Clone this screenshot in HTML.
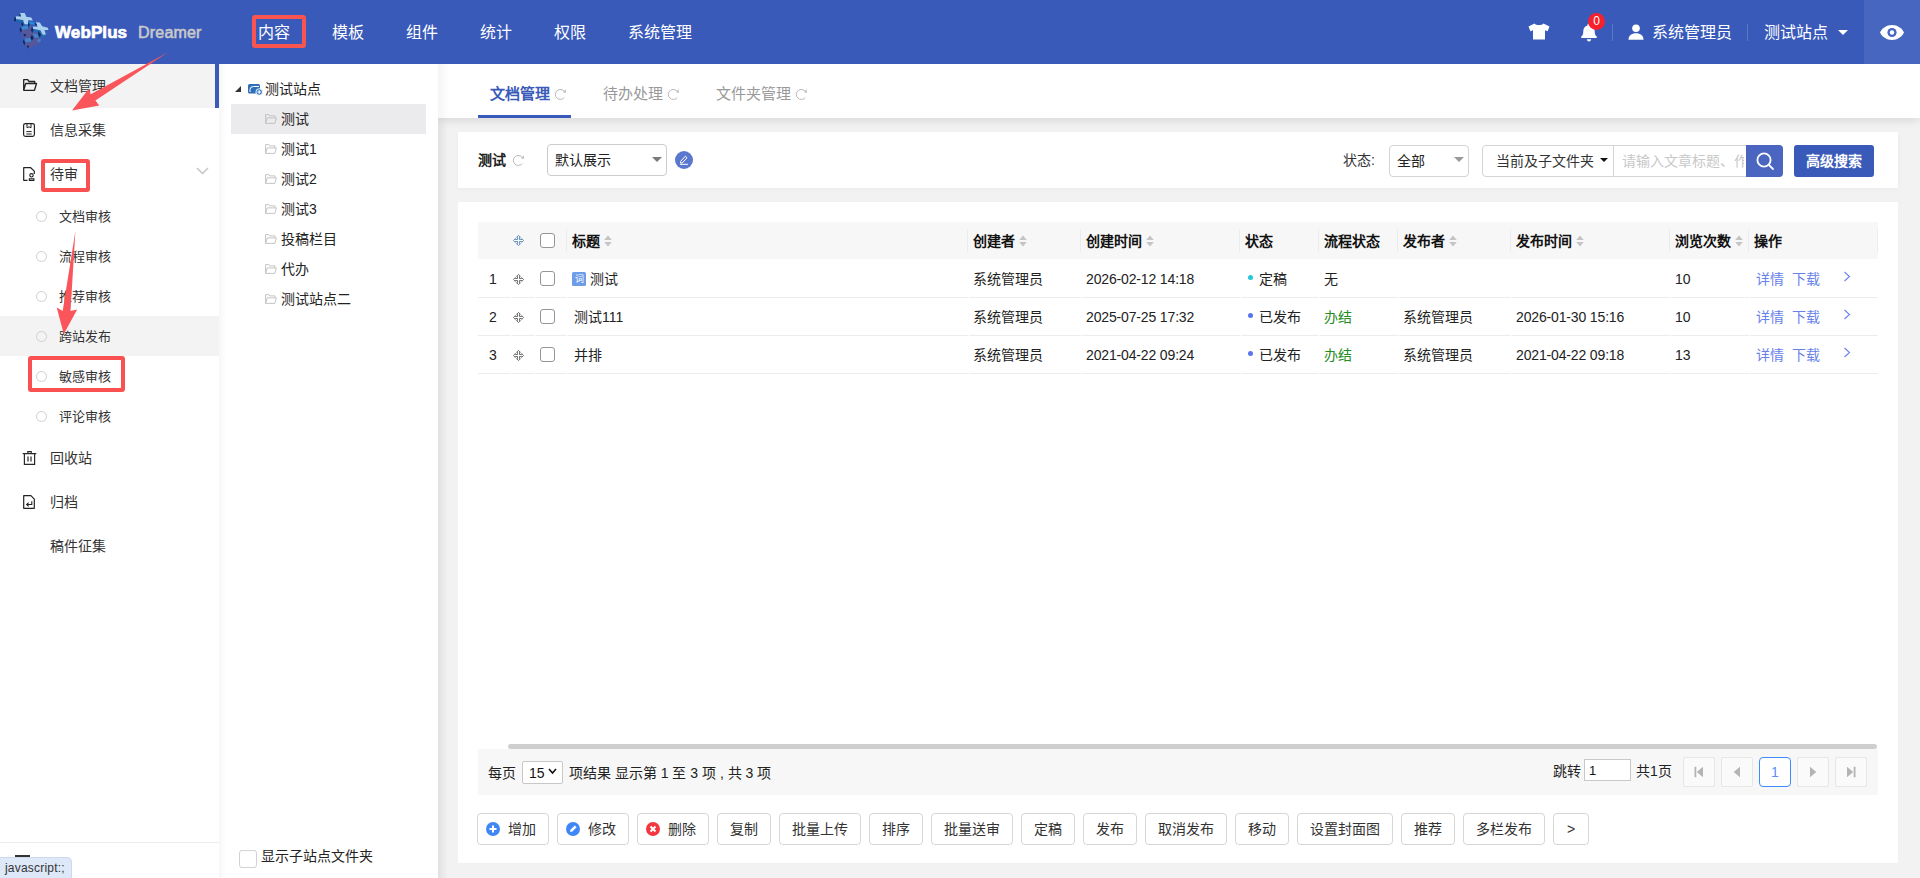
<!DOCTYPE html>
<html lang="zh-CN">
<head>
<meta charset="utf-8">
<title>WebPlus Dreamer</title>
<style>
*{box-sizing:border-box;margin:0;padding:0}
html,body{width:1920px;height:878px;overflow:hidden;background:#f2f2f2;font-family:"Liberation Sans",sans-serif;font-size:14px;color:#222}
.abs{position:absolute}
#hdr{z-index:3;position:absolute;left:0;top:0;width:1920px;height:64px;background:#395ab9}
#hdr .nav{position:absolute;top:0;height:64px;line-height:65px;color:#fff;font-size:16px;white-space:nowrap}
#eye{position:absolute;left:1864px;top:0;width:56px;height:64px;background:#4766c0}
#side{z-index:2;position:absolute;left:0;top:64px;width:219px;height:814px;background:#fff}
#side .it{position:absolute;left:0;width:219px;height:44px;line-height:44px;font-size:14px;color:#333}
#side .it span{position:absolute;left:50px;top:0;white-space:nowrap}
#side .sub{position:absolute;left:0;width:219px;height:40px;line-height:40px;font-size:13px;color:#333}
#side .sub span{position:absolute;left:59px;top:0.500px;white-space:nowrap}
#side .sub i{position:absolute;left:36px;top:15px;width:11px;height:11px;border:1.200px solid #cfcfcf;border-radius:50%}
#tree{z-index:2;position:absolute;left:219px;top:64px;width:219px;height:814px;background:#fff}
#tree .n{position:absolute;left:62px;height:30px;line-height:30px;margin-top:0.500px;font-size:14px;color:#222;white-space:nowrap}
#main{position:absolute;left:0;top:0;width:1920px;height:878px}
.panel{position:absolute;background:#fff}
.th{position:absolute;top:0;height:38px;line-height:38px;font-weight:bold;font-size:14px;color:#111;white-space:nowrap}
.td{position:absolute;height:38px;line-height:38px;font-size:14px;color:#222;white-space:nowrap}
.btn{position:absolute;top:813px;height:32px;line-height:30px;border:1px solid #d6d6d6;border-radius:4px;background:#fff;font-size:14px;color:#333;text-align:center;white-space:nowrap}
.pg{position:absolute;top:12px;width:32px;height:30px;border:1px solid #e2e2e2;border-radius:3px;background:#f5f5f5}
</style>
</head>
<body>
<div id="hdr">
<svg class="abs" style="left:8px;top:6px" width="50" height="50" viewBox="0 0 878 878">
<path d="M240 400L400 330 440 400 440 450 540 480 575 560 570 640 480 690 360 750 300 680 280 560 230 470z" fill="#57589c"/>
<path d="M110 215L135 232 265 247 290 320 370 325 365 400 250 420 235 300 130 290 110 265z" fill="#2563ad"/>
<path d="M440 400L570 425 610 505 665 500 705 420 700 460 660 540 580 560 540 480 440 450z" fill="#2a6bb5"/>
<path d="M235 360L350 340 360 400 250 420z" fill="#3d86cf"/>
<path d="M300 570L390 560 410 620 310 640z" fill="#3d86cf"/>
<path d="M440 480L520 495 545 560 460 550z" fill="#3d86cf"/>
<path d="M515 595L570 570 575 620 530 640z" fill="#3d86cf"/>
<path d="M370 275L450 285 465 325 385 320z" fill="#1c92dc"/>
<path d="M205 125L295 125 320 190 410 200 435 255 350 250 370 325 290 320 265 245 135 230 130 180 225 185z" fill="#a9d1ef"/>
<path d="M490 285L560 290 600 355 700 380 710 420 640 420 665 500 610 505 570 425 440 400 440 360 520 365z" fill="#a9d1ef"/>
<path d="M120 195L135 180 140 262 115 270 105 240z" fill="#0b2b60"/>
<path d="M200 140L215 130 225 185 200 175z" fill="#0b2b60"/>
<path d="M240 280L270 320 255 365 232 320z" fill="#0b2b60"/>
<path d="M215 370L245 420 225 470 203 420z" fill="#0b2b60"/>
<path d="M265 490L320 498 298 545z" fill="#0b2b60"/>
<path d="M420 505L450 560 420 612 393 555z" fill="#0b2b60"/>
<path d="M272 585L302 640 287 692 262 632z" fill="#0b2b60"/>
<path d="M328 695L372 700 350 752z" fill="#0b2b60"/>
<path d="M420 370L447 420 425 472 403 420z" fill="#0b2b60"/>
<path d="M530 435L580 500 560 557 528 500z" fill="#0b2b60"/>
<path d="M478 290L512 335 480 342z" fill="#0b2b60"/>
<path d="M360 268L378 330 362 385 350 320z" fill="#0b2b60"/>
</svg>
<div class="abs" style="left:55px;top:22px;font-size:17px;line-height:22px;font-weight:bold;color:#fff;letter-spacing:0.1px;white-space:nowrap;-webkit-text-stroke:0.7px #fff">WebPlus</div>
<div class="abs" style="left:138px;top:22px;font-size:16px;line-height:22px;color:#c9c9c9;letter-spacing:0.2px;white-space:nowrap;-webkit-text-stroke:0.6px #c9c9c9">Dreamer</div>
<div class="nav" style="left:258px">内容</div>
<div class="nav" style="left:332px">模板</div>
<div class="nav" style="left:406px">组件</div>
<div class="nav" style="left:480px">统计</div>
<div class="nav" style="left:554px">权限</div>
<div class="nav" style="left:628px">系统管理</div>
<div class="abs" style="left:252px;top:15px;width:54px;height:33px;border:4px solid #f95450;border-radius:3px"></div>
<!-- tshirt -->
<svg class="abs" style="left:1528px;top:23px" width="22" height="17" viewBox="0 0 22 17"><path d="M6.5 0.5C8 2.6 14 2.6 15.5 0.5L21.5 3.5 19.6 8.2 17 7.2V16.5H5V7.2L2.4 8.2 0.5 3.5z" fill="#fff"/></svg>
<!-- bell -->
<svg class="abs" style="left:1580px;top:23px" width="18" height="19" viewBox="0 0 18 19"><path d="M9 0.5c0.9 0 1.5 0.6 1.5 1.4v0.5c2.6 0.7 4.2 2.9 4.2 5.6 0 3.4 0.8 4.6 2 5.6 0.5 0.5 0.3 1.5-0.6 1.5H1.9c-0.9 0-1.1-1-0.6-1.5 1.2-1 2-2.2 2-5.6 0-2.7 1.6-4.9 4.2-5.6V1.9C7.5 1.1 8.1 0.5 9 0.5zM6.8 16.2h4.4c0 1.2-1 2.2-2.2 2.2s-2.2-1-2.2-2.2z" fill="#fff"/></svg>
<div class="abs" style="left:1588px;top:13px;width:17px;height:17px;border-radius:50%;background:#f5222d;color:#fff;font-size:12px;line-height:17px;text-align:center">0</div>
<div class="abs" style="left:1612px;top:24px;width:1px;height:17px;background:#5b76c6"></div>
<!-- user -->
<svg class="abs" style="left:1628px;top:24px" width="16" height="16" viewBox="0 0 16 16"><circle cx="8" cy="4.2" r="3.8" fill="#fff"/><path d="M0.5 15.8c0-4.3 3-6.6 7.5-6.6s7.5 2.3 7.5 6.6z" fill="#fff"/></svg>
<div class="nav" style="left:1652px">系统管理员</div>
<div class="abs" style="left:1747px;top:24px;width:1px;height:17px;background:#5b76c6"></div>
<div class="nav" style="left:1764px">测试站点</div>
<div class="abs" style="left:1838px;top:30px;width:0;height:0;border-left:5px solid transparent;border-right:5px solid transparent;border-top:5px solid #fff"></div>
<div id="eye">
<svg class="abs" style="left:16px;top:25px" width="24" height="15" viewBox="0 0 24 15"><path d="M12 0C6.5 0 2 3.4 0 7.5 2 11.6 6.5 15 12 15s10-3.4 12-7.5C22 3.4 17.500 0 12 0z" fill="#fff"/><circle cx="12" cy="7.500" r="4.600" fill="#4766c0"/><circle cx="12" cy="7.500" r="2.200" fill="#fff"/></svg>
</div>
</div>
<div id="side">
<div class="it" style="top:0;background:#f3f3f3;width:215px"><span>文档管理</span>
<svg class="abs" style="left:22px;top:14px" width="16" height="14" viewBox="0 0 16 14"><path d="M1.700 12.300V1.700h4l1.300 1.800h5.700v2M1.700 12.300l2-6.800h10.800l-2 6.800z" fill="none" stroke="#222" stroke-width="1.300" stroke-linejoin="round"/></svg>
</div>
<div class="abs" style="left:215px;top:0;width:4px;height:44px;background:#395ab9"></div>
<div class="it" style="top:44px"><span>信息采集</span>
<svg class="abs" style="left:22px;top:14px" width="14" height="16" viewBox="0 0 14 16"><rect x="1.600" y="1.600" width="10.800" height="12.800" rx="1.800" fill="none" stroke="#222" stroke-width="1.200"/><path d="M5 1.600v4.200l2-1 2 1V1.600M4.300 9.600h5.400M4.300 12h5.400" fill="none" stroke="#222" stroke-width="1"/></svg>
</div>
<div class="it" style="top:88px"><span>待审</span>
<svg class="abs" style="left:22px;top:14px" width="14" height="16" viewBox="0 0 14 16"><path d="M5.500 14.300H1.700V1.700h7l3.600 3.400v3" fill="none" stroke="#222" stroke-width="1.200" stroke-linejoin="round"/><circle cx="9.500" cy="9.300" r="1.700" fill="none" stroke="#222" stroke-width="1.100"/><path d="M6.800 14.500h5.600M7.300 12.700h4.600v1.600H7.300z" fill="none" stroke="#222" stroke-width="1.100"/></svg>
<svg class="abs" style="left:196px;top:15px" width="13" height="8" viewBox="0 0 13 8"><path d="M1 1l5.500 5.500L12 1" fill="none" stroke="#c2c2c2" stroke-width="1.400"/></svg>
</div>
<div class="sub" style="top:132px"><i></i><span>文档审核</span></div>
<div class="sub" style="top:172px"><i></i><span>流程审核</span></div>
<div class="sub" style="top:212px"><i></i><span>推荐审核</span></div>
<div class="sub" style="top:252px;background:#f3f3f3"><i></i><span>跨站发布</span></div>
<div class="sub" style="top:292px"><i></i><span>敏感审核</span></div>
<div class="sub" style="top:332px"><i></i><span>评论审核</span></div>
<div class="it" style="top:372px"><span>回收站</span>
<svg class="abs" style="left:22px;top:14px" width="15" height="16" viewBox="0 0 15 16"><path d="M0.700 3.600h13.600M5.800 3.400V1.700h3.400v1.700M2.400 3.800v10.600h10.200V3.800M6 6.500v5M9 6.500v5" fill="none" stroke="#2a2a2a" stroke-width="1.200"/></svg>
</div>
<div class="it" style="top:416px"><span>归档</span>
<svg class="abs" style="left:22px;top:14px" width="14" height="16" viewBox="0 0 14 16"><path d="M1.700 14.300V1.700h7.200l3.400 3.400v9.200z" fill="none" stroke="#222" stroke-width="1.200" stroke-linejoin="round"/><path d="M9.800 7.200v3.300H4.800M6.600 8.700l-1.900 1.800 1.900 1.800" fill="none" stroke="#222" stroke-width="1.100"/></svg>
</div>
<div class="it" style="top:460px"><span>稿件征集</span></div>
<div class="abs" style="left:0;top:778px;width:219px;height:1px;background:#ececec"></div>
<div class="abs" style="left:15px;top:791px;width:15px;height:2px;background:#333"></div>
<!-- red annotations -->
<div class="abs" style="left:41px;top:95px;width:49px;height:33px;border:4px solid #f95052;border-radius:3px"></div>
<div class="abs" style="left:28px;top:292px;width:97px;height:36px;border:4px solid #f95052;border-radius:3px"></div>
</div>
<svg class="abs" style="left:0;top:0;pointer-events:none;z-index:6" width="260" height="400" viewBox="0 0 260 400">
<path d="M168 52.300L90.700 94.300 89 88.400 72 110.500 99.200 105.400 95.400 100.500z" fill="#f9555a"/>
<path d="M75.400 231L70.500 311.100 77.200 309.400 63.800 334 56.700 307.500 62.700 311.100z" fill="#f9555a"/>
</svg>
<div class="abs" style="z-index:6;left:0;top:857px;width:72px;height:21px;background:#dde8f8;border-top-right-radius:5px;border-top:1px solid #cdd9ec;border-right:1px solid #cdd9ec;font-size:12px;line-height:20px;color:#333;padding-left:5px;letter-spacing:0.2px">javascript:;</div>
<div id="tree">
<div class="abs" style="left:0;top:0;width:7px;height:814px;background:linear-gradient(to right,rgba(0,0,0,0.035),rgba(0,0,0,0))"></div>
<svg class="abs" style="left:15px;top:21px" width="8" height="8" viewBox="0 0 8 8"><path d="M7 1v6H1z" fill="#333"/></svg>
<svg class="abs" style="left:28px;top:19px" width="16" height="13" viewBox="0 0 16 13"><rect x="1" y="1" width="12" height="9.500" rx="1.500" fill="#2e6fb7"/><path d="M3 9V6.500Q3 3.500 6.500 3.500H12" fill="none" stroke="#fff" stroke-width="1"/><circle cx="12.200" cy="9" r="3.300" fill="#3b7dc8" stroke="#fff" stroke-width="0.900"/><path d="M12.200 7.200v3.600M10.400 9h3.600" stroke="#fff" stroke-width="1.200"/></svg>
<div class="n" style="left:46px;top:9px">测试站点</div>
<div class="abs" style="left:12px;top:40px;width:195px;height:30px;background:#ebebed"></div>
<svg width="0" height="0" style="position:absolute"><defs><symbol id="fo" viewBox="0 0 12 10"><path d="M0.600 9.400V0.600h3.200l1 1.300h5.200v1.600M0.600 9.400l1.600-5.500h9.200l-1.600 5.500z" fill="none" stroke="#bdbdbd" stroke-width="0.900" stroke-linejoin="round"/></symbol></defs></svg>
<svg class="abs" style="left:46px;top:50px" width="12" height="10"><use href="#fo"/></svg><div class="n" style="top:39px">测试</div>
<svg class="abs" style="left:46px;top:80px" width="12" height="10"><use href="#fo"/></svg><div class="n" style="top:69px">测试1</div>
<svg class="abs" style="left:46px;top:110px" width="12" height="10"><use href="#fo"/></svg><div class="n" style="top:99px">测试2</div>
<svg class="abs" style="left:46px;top:140px" width="12" height="10"><use href="#fo"/></svg><div class="n" style="top:129px">测试3</div>
<svg class="abs" style="left:46px;top:170px" width="12" height="10"><use href="#fo"/></svg><div class="n" style="top:159px">投稿栏目</div>
<svg class="abs" style="left:46px;top:200px" width="12" height="10"><use href="#fo"/></svg><div class="n" style="top:189px">代办</div>
<svg class="abs" style="left:46px;top:230px" width="12" height="10"><use href="#fo"/></svg><div class="n" style="top:219px">测试站点二</div>
<div class="abs" style="left:20px;top:786px;width:18px;height:18px;border:1px solid #d2d2d2;border-radius:3px;background:#fff"></div>
<div class="n" style="left:42px;top:776px">显示子站点文件夹</div>
</div>
<div id="main">
<div class="panel" style="left:438px;top:64px;width:1482px;height:54px;box-shadow:0 1px 10px rgba(0,0,0,0.14)"></div><div class="abs" style="left:438px;top:64px;width:12px;height:54px;background:linear-gradient(to right,rgba(0,0,0,0.04),rgba(0,0,0,0))"></div><div class="abs" style="left:438px;top:118px;width:10px;height:760px;background:linear-gradient(to right,rgba(0,0,0,0.07),rgba(0,0,0,0))"></div>
<div class="abs" style="left:490px;top:83px;font-size:15px;line-height:22px;font-weight:bold;color:#395ab9;white-space:nowrap">文档管理</div><svg class="abs" style="left:554px;top:88px" width="13" height="13" viewBox="0 0 13 13"><path d="M10.500 3.700A5 5 0 1 0 10.300 9.500" fill="none" stroke="#b9b9b9" stroke-width="1"/><path d="M11.900 1.300V4.800L9 4.400z" fill="#b9b9b9"/></svg>
<div class="abs" style="left:478px;top:115px;width:93px;height:3px;background:#395ab9"></div>
<div class="abs" style="left:603px;top:83px;font-size:15px;line-height:22px;color:#999;white-space:nowrap">待办处理</div><svg class="abs" style="left:667px;top:88px" width="13" height="13" viewBox="0 0 13 13"><path d="M10.500 3.700A5 5 0 1 0 10.300 9.500" fill="none" stroke="#b9b9b9" stroke-width="1"/><path d="M11.900 1.300V4.800L9 4.400z" fill="#b9b9b9"/></svg>
<div class="abs" style="left:716px;top:83px;font-size:15px;line-height:22px;color:#999;white-space:nowrap">文件夹管理</div><svg class="abs" style="left:795px;top:88px" width="13" height="13" viewBox="0 0 13 13"><path d="M10.500 3.700A5 5 0 1 0 10.300 9.500" fill="none" stroke="#b9b9b9" stroke-width="1"/><path d="M11.900 1.300V4.800L9 4.400z" fill="#b9b9b9"/></svg>
<div class="panel" style="left:458px;top:132px;width:1440px;height:56px;box-shadow:0 1px 4px rgba(0,0,0,0.04)"></div>
<div class="abs" style="left:478px;top:149px;font-size:14px;line-height:22px;font-weight:bold;color:#222;white-space:nowrap">测试</div><svg class="abs" style="left:512px;top:154px" width="13" height="13" viewBox="0 0 13 13"><path d="M10.500 3.700A5 5 0 1 0 10.300 9.500" fill="none" stroke="#b9b9b9" stroke-width="1"/><path d="M11.900 1.300V4.800L9 4.400z" fill="#b9b9b9"/></svg>
<div class="abs" style="left:547px;top:144px;width:120px;height:32px;border:1px solid #ccc;border-radius:4px;background:#fff;font-size:14px;line-height:30px;padding-left:7px;color:#222">默认展示</div>
<div class="abs" style="left:652px;top:157px;width:0;height:0;border-left:5px solid transparent;border-right:5px solid transparent;border-top:5.500px solid #7a7a7a"></div>
<div class="abs" style="left:675px;top:151px;width:18px;height:18px;border-radius:50%;background:#5b78cf"></div><svg class="abs" style="left:679px;top:155px" width="10" height="10" viewBox="0 0 10 10"><path d="M1.500 6.500L6.300 1.200 8 2.800 3.200 8H1.500zM1 9.300h8" fill="none" stroke="#fff" stroke-width="1"/></svg>
<div class="abs" style="left:1343px;top:149px;font-size:14px;line-height:22px;color:#333;white-space:nowrap">状态:</div>
<div class="abs" style="left:1389px;top:145px;width:80px;height:32px;border:1px solid #d4d4d4;border-radius:4px;background:#fff;font-size:14px;line-height:30px;padding-left:7px;color:#222">全部</div>
<div class="abs" style="left:1454px;top:157px;width:0;height:0;border-left:5px solid transparent;border-right:5px solid transparent;border-top:5px solid #999"></div>
<div class="abs" style="left:1482px;top:145px;width:301px;height:32px;border:1px solid #d4d4d4;border-radius:4px;background:#fff"></div>
<div class="abs" style="left:1496px;top:150px;font-size:14px;line-height:22px;color:#333;white-space:nowrap">当前及子文件夹</div>
<div class="abs" style="left:1600px;top:158px;width:0;height:0;border-left:4.500px solid transparent;border-right:4.500px solid transparent;border-top:4.500px solid #111"></div>
<div class="abs" style="left:1613px;top:146px;width:1px;height:30px;background:#d4d4d4"></div>
<div class="abs" style="left:1622px;top:150px;width:122px;overflow:hidden;font-size:14px;line-height:22px;color:#c8c8c8;white-space:nowrap">请输入文章标题、作者</div>
<div class="abs" style="left:1746px;top:145px;width:37px;height:32px;background:#4a66c0;border-radius:0 4px 4px 0"></div><svg class="abs" style="left:1755px;top:151px" width="20" height="20" viewBox="0 0 20 20"><circle cx="9" cy="9" r="6.600" fill="none" stroke="#fff" stroke-width="1.800"/><path d="M13.800 13.800L18 18" stroke="#fff" stroke-width="1.800" stroke-linecap="round"/></svg>
<div class="abs" style="left:1794px;top:145px;width:80px;height:32px;background:#395ab9;border-radius:3px;color:#fff;font-weight:bold;font-size:14px;line-height:32px;text-align:center">高级搜索</div>
<div class="panel" style="left:458px;top:202px;width:1440px;height:661px"></div>
<div class="abs" style="left:478px;top:222px;width:1400px;height:37px;background:#f7f7f7"></div>
<div class="abs" style="left:566px;top:229px;width:1px;height:23px;background:#ececec"></div>
<div class="abs" style="left:967px;top:229px;width:1px;height:23px;background:#ececec"></div>
<div class="abs" style="left:1080px;top:229px;width:1px;height:23px;background:#ececec"></div>
<div class="abs" style="left:1239px;top:229px;width:1px;height:23px;background:#ececec"></div>
<div class="abs" style="left:1318px;top:229px;width:1px;height:23px;background:#ececec"></div>
<div class="abs" style="left:1397px;top:229px;width:1px;height:23px;background:#ececec"></div>
<div class="abs" style="left:1510px;top:229px;width:1px;height:23px;background:#ececec"></div>
<div class="abs" style="left:1669px;top:229px;width:1px;height:23px;background:#ececec"></div>
<div class="abs" style="left:1748px;top:229px;width:1px;height:23px;background:#ececec"></div>
<div class="abs" style="left:1877px;top:229px;width:1px;height:23px;background:#ececec"></div>
<div class="th" style="left:572px;top:222px">标题</div>
<svg class="abs" style="left:604px;top:235px" width="8" height="12" viewBox="0 0 8 12"><path d="M4 0.500L7.800 5H0.200z" fill="#c4c4c4"/><path d="M4 11.500L7.800 7H0.200z" fill="#c4c4c4"/></svg>
<div class="th" style="left:973px;top:222px">创建者</div>
<svg class="abs" style="left:1019px;top:235px" width="8" height="12" viewBox="0 0 8 12"><path d="M4 0.500L7.800 5H0.200z" fill="#c4c4c4"/><path d="M4 11.500L7.800 7H0.200z" fill="#c4c4c4"/></svg>
<div class="th" style="left:1086px;top:222px">创建时间</div>
<svg class="abs" style="left:1146px;top:235px" width="8" height="12" viewBox="0 0 8 12"><path d="M4 0.500L7.800 5H0.200z" fill="#c4c4c4"/><path d="M4 11.500L7.800 7H0.200z" fill="#c4c4c4"/></svg>
<div class="th" style="left:1245px;top:222px">状态</div>
<div class="th" style="left:1324px;top:222px">流程状态</div>
<div class="th" style="left:1403px;top:222px">发布者</div>
<svg class="abs" style="left:1449px;top:235px" width="8" height="12" viewBox="0 0 8 12"><path d="M4 0.500L7.800 5H0.200z" fill="#c4c4c4"/><path d="M4 11.500L7.800 7H0.200z" fill="#c4c4c4"/></svg>
<div class="th" style="left:1516px;top:222px">发布时间</div>
<svg class="abs" style="left:1576px;top:235px" width="8" height="12" viewBox="0 0 8 12"><path d="M4 0.500L7.800 5H0.200z" fill="#c4c4c4"/><path d="M4 11.500L7.800 7H0.200z" fill="#c4c4c4"/></svg>
<div class="th" style="left:1675px;top:222px">浏览次数</div>
<svg class="abs" style="left:1735px;top:235px" width="8" height="12" viewBox="0 0 8 12"><path d="M4 0.500L7.800 5H0.200z" fill="#c4c4c4"/><path d="M4 11.500L7.800 7H0.200z" fill="#c4c4c4"/></svg>
<div class="th" style="left:1754px;top:222px">操作</div>
<svg class="abs" style="left:513px;top:235px" width="11" height="11" viewBox="0 0 11 11"><path d="M5.500 0.400L7.400 2.300H6.500V4.500H8.700V3.600L10.600 5.500 8.700 7.400V6.500H6.500V8.700H7.400L5.500 10.600 3.600 8.700H4.500V6.500H2.300V7.400L0.400 5.500 2.300 3.600V4.500H4.500V2.300H3.600z" fill="none" stroke="#5583b5" stroke-width="0.900"/></svg>
<div class="abs" style="left:540px;top:233px;width:15px;height:15px;border:1.500px solid #959595;border-radius:3px;background:#fff"></div>
<div class="abs" style="left:478px;top:297px;width:1400px;height:1px;background:#ececec"></div>
<div class="td" style="left:489px;top:260px">1</div>
<svg class="abs" style="left:513px;top:274px" width="11" height="11" viewBox="0 0 11 11"><path d="M5.500 0.400L7.400 2.300H6.500V4.500H8.700V3.600L10.600 5.500 8.700 7.400V6.500H6.500V8.700H7.400L5.500 10.600 3.600 8.700H4.500V6.500H2.300V7.400L0.400 5.500 2.300 3.600V4.500H4.500V2.300H3.600z" fill="none" stroke="#5e5e5e" stroke-width="0.900"/></svg>
<div class="abs" style="left:540px;top:271px;width:15px;height:15px;border:1.500px solid #959595;border-radius:3px;background:#fff"></div>
<div class="abs" style="left:572px;top:272px;width:14px;height:14px;background:#6d9de8;border-radius:1.500px;color:#fff;font-size:9px;line-height:14px;text-align:center">词</div>
<div class="td" style="left:590px;top:260px">测试</div>
<div class="td" style="left:973px;top:260px">系统管理员</div>
<div class="td" style="left:1086px;top:260px;letter-spacing:-0.15px">2026-02-12 14:18</div>
<div class="abs" style="left:1248px;top:275px;width:5px;height:5px;border-radius:50%;background:#27c5d8"></div>
<div class="td" style="left:1259px;top:260px">定稿</div>
<div class="td" style="left:1324px;top:260px;color:#222">无</div>
<div class="td" style="left:1675px;top:260px">10</div>
<div class="td" style="left:1756px;top:260px;color:#6882ea">详情</div>
<div class="td" style="left:1792px;top:260px;color:#6882ea">下载</div>
<svg class="abs" style="left:1843px;top:271px" width="8" height="11" viewBox="0 0 8 11"><path d="M1.500 1L6.500 5.500 1.500 10" fill="none" stroke="#6882ea" stroke-width="1.100"/></svg>
<div class="abs" style="left:478px;top:335px;width:1400px;height:1px;background:#ececec"></div>
<div class="td" style="left:489px;top:298px">2</div>
<svg class="abs" style="left:513px;top:312px" width="11" height="11" viewBox="0 0 11 11"><path d="M5.500 0.400L7.400 2.300H6.500V4.500H8.700V3.600L10.600 5.500 8.700 7.400V6.500H6.500V8.700H7.400L5.500 10.600 3.600 8.700H4.500V6.500H2.300V7.400L0.400 5.500 2.300 3.600V4.500H4.500V2.300H3.600z" fill="none" stroke="#5e5e5e" stroke-width="0.900"/></svg>
<div class="abs" style="left:540px;top:309px;width:15px;height:15px;border:1.500px solid #959595;border-radius:3px;background:#fff"></div>
<div class="td" style="left:574px;top:298px">测试111</div>
<div class="td" style="left:973px;top:298px">系统管理员</div>
<div class="td" style="left:1086px;top:298px;letter-spacing:-0.15px">2025-07-25 17:32</div>
<div class="abs" style="left:1248px;top:313px;width:5px;height:5px;border-radius:50%;background:#5a73ee"></div>
<div class="td" style="left:1259px;top:298px">已发布</div>
<div class="td" style="left:1324px;top:298px;color:#258c22">办结</div>
<div class="td" style="left:1403px;top:298px">系统管理员</div>
<div class="td" style="left:1516px;top:298px;letter-spacing:-0.15px">2026-01-30 15:16</div>
<div class="td" style="left:1675px;top:298px">10</div>
<div class="td" style="left:1756px;top:298px;color:#6882ea">详情</div>
<div class="td" style="left:1792px;top:298px;color:#6882ea">下载</div>
<svg class="abs" style="left:1843px;top:309px" width="8" height="11" viewBox="0 0 8 11"><path d="M1.500 1L6.500 5.500 1.500 10" fill="none" stroke="#6882ea" stroke-width="1.100"/></svg>
<div class="abs" style="left:478px;top:373px;width:1400px;height:1px;background:#ececec"></div>
<div class="td" style="left:489px;top:336px">3</div>
<svg class="abs" style="left:513px;top:350px" width="11" height="11" viewBox="0 0 11 11"><path d="M5.500 0.400L7.400 2.300H6.500V4.500H8.700V3.600L10.600 5.500 8.700 7.400V6.500H6.500V8.700H7.400L5.500 10.600 3.600 8.700H4.500V6.500H2.300V7.400L0.400 5.500 2.300 3.600V4.500H4.500V2.300H3.600z" fill="none" stroke="#5e5e5e" stroke-width="0.900"/></svg>
<div class="abs" style="left:540px;top:347px;width:15px;height:15px;border:1.500px solid #959595;border-radius:3px;background:#fff"></div>
<div class="td" style="left:574px;top:336px">并排</div>
<div class="td" style="left:973px;top:336px">系统管理员</div>
<div class="td" style="left:1086px;top:336px;letter-spacing:-0.15px">2021-04-22 09:24</div>
<div class="abs" style="left:1248px;top:351px;width:5px;height:5px;border-radius:50%;background:#5a73ee"></div>
<div class="td" style="left:1259px;top:336px">已发布</div>
<div class="td" style="left:1324px;top:336px;color:#258c22">办结</div>
<div class="td" style="left:1403px;top:336px">系统管理员</div>
<div class="td" style="left:1516px;top:336px;letter-spacing:-0.15px">2021-04-22 09:18</div>
<div class="td" style="left:1675px;top:336px">13</div>
<div class="td" style="left:1756px;top:336px;color:#6882ea">详情</div>
<div class="td" style="left:1792px;top:336px;color:#6882ea">下载</div>
<svg class="abs" style="left:1843px;top:347px" width="8" height="11" viewBox="0 0 8 11"><path d="M1.500 1L6.500 5.500 1.500 10" fill="none" stroke="#6882ea" stroke-width="1.100"/></svg>
<div class="abs" style="left:511px;top:297px;width:1px;height:1px;background:#fff"></div><div class="abs" style="left:511px;top:335px;width:1px;height:1px;background:#fff"></div><div class="abs" style="left:511px;top:373px;width:1px;height:1px;background:#fff"></div><div class="abs" style="left:535px;top:297px;width:1px;height:1px;background:#fff"></div><div class="abs" style="left:535px;top:335px;width:1px;height:1px;background:#fff"></div><div class="abs" style="left:535px;top:373px;width:1px;height:1px;background:#fff"></div><div class="abs" style="left:567px;top:297px;width:1px;height:1px;background:#fff"></div><div class="abs" style="left:567px;top:335px;width:1px;height:1px;background:#fff"></div><div class="abs" style="left:567px;top:373px;width:1px;height:1px;background:#fff"></div><div class="abs" style="left:968px;top:297px;width:1px;height:1px;background:#fff"></div><div class="abs" style="left:968px;top:335px;width:1px;height:1px;background:#fff"></div><div class="abs" style="left:968px;top:373px;width:1px;height:1px;background:#fff"></div><div class="abs" style="left:1081px;top:297px;width:1px;height:1px;background:#fff"></div><div class="abs" style="left:1081px;top:335px;width:1px;height:1px;background:#fff"></div><div class="abs" style="left:1081px;top:373px;width:1px;height:1px;background:#fff"></div><div class="abs" style="left:1240px;top:297px;width:1px;height:1px;background:#fff"></div><div class="abs" style="left:1240px;top:335px;width:1px;height:1px;background:#fff"></div><div class="abs" style="left:1240px;top:373px;width:1px;height:1px;background:#fff"></div><div class="abs" style="left:1319px;top:297px;width:1px;height:1px;background:#fff"></div><div class="abs" style="left:1319px;top:335px;width:1px;height:1px;background:#fff"></div><div class="abs" style="left:1319px;top:373px;width:1px;height:1px;background:#fff"></div><div class="abs" style="left:1398px;top:297px;width:1px;height:1px;background:#fff"></div><div class="abs" style="left:1398px;top:335px;width:1px;height:1px;background:#fff"></div><div class="abs" style="left:1398px;top:373px;width:1px;height:1px;background:#fff"></div><div class="abs" style="left:1511px;top:297px;width:1px;height:1px;background:#fff"></div><div class="abs" style="left:1511px;top:335px;width:1px;height:1px;background:#fff"></div><div class="abs" style="left:1511px;top:373px;width:1px;height:1px;background:#fff"></div><div class="abs" style="left:1670px;top:297px;width:1px;height:1px;background:#fff"></div><div class="abs" style="left:1670px;top:335px;width:1px;height:1px;background:#fff"></div><div class="abs" style="left:1670px;top:373px;width:1px;height:1px;background:#fff"></div><div class="abs" style="left:1749px;top:297px;width:1px;height:1px;background:#fff"></div><div class="abs" style="left:1749px;top:335px;width:1px;height:1px;background:#fff"></div><div class="abs" style="left:1749px;top:373px;width:1px;height:1px;background:#fff"></div><div class="abs" style="left:508px;top:744px;width:1369px;height:5px;background:#cfcfcf;border-radius:3px"></div>
<div class="abs" style="left:478px;top:749px;width:1400px;height:46px;background:#f7f7f7"></div>
<div class="abs" style="left:488px;top:762px;font-size:14px;line-height:22px;color:#222;white-space:nowrap">每页</div>
<div class="abs" style="left:522px;top:761px;width:41px;height:23px;border:1px solid #c8c8c8;border-radius:2px;background:#fff;font-size:14px;line-height:22px;padding-left:6px;color:#111">15</div><svg class="abs" style="left:548px;top:768px" width="9" height="7" viewBox="0 0 9 7"><path d="M1 1l3.500 4L8 1" fill="none" stroke="#111" stroke-width="1.600"/></svg>
<div class="abs" style="left:569px;top:762px;font-size:14px;line-height:22px;color:#222;white-space:nowrap">项结果 显示第 1 至 3 项 , 共 3 项</div>
<div class="abs" style="left:1553px;top:760px;font-size:14px;line-height:22px;color:#222;white-space:nowrap">跳转</div>
<div class="abs" style="left:1584px;top:759px;width:47px;height:22px;border:1px solid #c8c8c8;background:#fff;font-size:13px;line-height:21px;padding-left:4px;color:#111">1</div>
<div class="abs" style="left:1636px;top:760px;font-size:14px;line-height:22px;color:#222;white-space:nowrap">共1页</div>
<div class="abs" style="left:1683px;top:757px;width:32px;height:30px;border:1px solid #e6e6e6;border-radius:2px;background:#fafafa"></div><svg class="abs" style="left:1692px;top:765px" width="14" height="14" viewBox="0 0 14 14"><path d="M2.500 1.800h1.800v10.400H2.500zM11 1.800L4.800 7l6.200 5.200z" fill="#b4b4b4"/></svg>
<div class="abs" style="left:1721px;top:757px;width:32px;height:30px;border:1px solid #e6e6e6;border-radius:2px;background:#fafafa"></div><svg class="abs" style="left:1730px;top:765px" width="14" height="14" viewBox="0 0 14 14"><path d="M10 1.800L3.700 7l6.300 5.200z" fill="#b4b4b4"/></svg>
<div class="abs" style="left:1797px;top:757px;width:32px;height:30px;border:1px solid #e6e6e6;border-radius:2px;background:#fafafa"></div><svg class="abs" style="left:1806px;top:765px" width="14" height="14" viewBox="0 0 14 14"><path d="M4 1.800L10.300 7l-6.300 5.200z" fill="#b4b4b4"/></svg>
<div class="abs" style="left:1835px;top:757px;width:32px;height:30px;border:1px solid #e6e6e6;border-radius:2px;background:#fafafa"></div><svg class="abs" style="left:1844px;top:765px" width="14" height="14" viewBox="0 0 14 14"><path d="M9.700 1.800h1.800v10.400H9.700zM3 1.800L9.200 7l-6.200 5.200z" fill="#b4b4b4"/></svg>
<div class="abs" style="left:1759px;top:757px;width:32px;height:30px;border:1px solid #3b8cff;border-radius:4px;background:#fff;color:#5b8ff9;font-size:14px;line-height:28px;text-align:center">1</div>
<div class="btn" style="left:477px;width:72px;text-align:left;padding-left:30px">增加</div><svg class="abs" style="left:486px;top:822px" width="14" height="14" viewBox="0 0 14 14"><circle cx="7" cy="7" r="7" fill="#3f87f5"/><path d="M7 3.500v7M3.500 7h7" stroke="#fff" stroke-width="2"/></svg>
<div class="btn" style="left:557px;width:72px;text-align:left;padding-left:30px">修改</div><svg class="abs" style="left:566px;top:822px" width="14" height="14" viewBox="0 0 14 14"><circle cx="7" cy="7" r="7" fill="#3f87f5"/><path d="M4 10l0.600-2.400 4.200-4.200 1.800 1.800-4.200 4.200z" fill="#fff"/></svg>
<div class="btn" style="left:637px;width:72px;text-align:left;padding-left:30px">删除</div><svg class="abs" style="left:646px;top:822px" width="14" height="14" viewBox="0 0 14 14"><circle cx="7" cy="7" r="7" fill="#f4363f"/><path d="M4.500 4.500l5 5M9.500 4.500l-5 5" stroke="#fff" stroke-width="2"/></svg>
<div class="btn" style="left:717px;width:54px">复制</div>
<div class="btn" style="left:779px;width:82px">批量上传</div>
<div class="btn" style="left:869px;width:54px">排序</div>
<div class="btn" style="left:931px;width:82px">批量送审</div>
<div class="btn" style="left:1021px;width:54px">定稿</div>
<div class="btn" style="left:1083px;width:54px">发布</div>
<div class="btn" style="left:1145px;width:82px">取消发布</div>
<div class="btn" style="left:1235px;width:54px">移动</div>
<div class="btn" style="left:1297px;width:96px">设置封面图</div>
<div class="btn" style="left:1401px;width:54px">推荐</div>
<div class="btn" style="left:1463px;width:82px">多栏发布</div>
<div class="btn" style="left:1553px;width:36px">&gt;</div>
</div>
</body>
</html>
